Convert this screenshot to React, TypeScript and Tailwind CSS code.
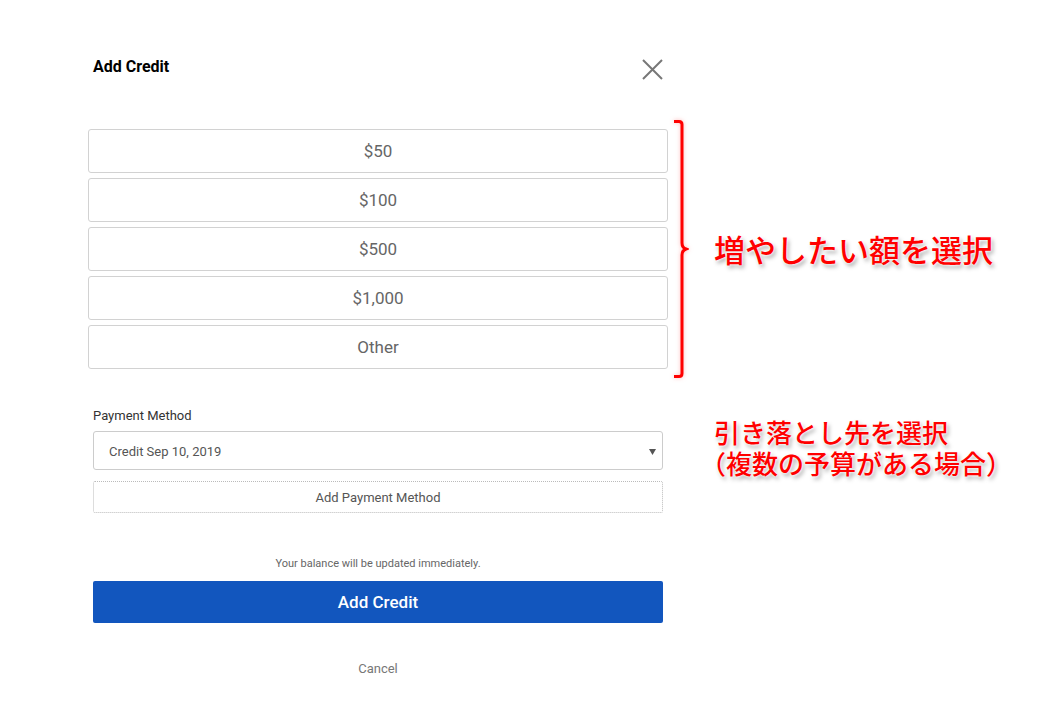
import React from 'react';

const amounts = ['$50', '$100', '$500', '$1,000', 'Other'];

const roboto = { fontFamily: 'Roboto, "Liberation Sans", sans-serif' };

export default function App() {
  return (
    <div className="w-full h-[702px] bg-white overflow-hidden" style={roboto}>
      <div className="flex">
        {/* dialog */}
        <div className="ml-[88px] w-[580px] pt-[56px] flex flex-col">
          <div className="flex justify-between items-start px-[5px] h-[73px]">
            <h2 className="mt-[1px] text-[16px] leading-[20px] font-bold text-black">Add Credit</h2>
            <button className="mt-[3px] w-[21px] h-[21px]" aria-label="close">
              <svg width="21" height="21" viewBox="0 0 21 21">
                <path d="M1 1 L20 20 M20 1 L1 20" stroke="#777" strokeWidth="2" fill="none" />
              </svg>
            </button>
          </div>

          <div className="flex flex-col gap-[5px]">
            {amounts.map(a => (
              <button
                key={a}
                className="h-[44px] w-full pt-[2px] border border-[#d2d2d2] rounded-[3px] bg-white text-[17px] text-[#666]"
              >
                {a}
              </button>
            ))}
          </div>

          <div className="px-[5px] flex flex-col">
            <label className="mt-[39px] text-[13px] leading-[16px] text-[#333]">Payment Method</label>
            <div className="mt-[7px] h-[39px] pt-[2px] border border-[#ccc] rounded-[3px] flex items-center justify-between pl-[15px] pr-[6px]">
              <span className="text-[13px] text-[#555]">Credit Sep 10, 2019</span>
              <svg width="7" height="6" viewBox="0 0 7 6">
                <path d="M0 0 H7 L3.5 6 Z" fill="#555" />
              </svg>
            </div>
            <button className="mt-[11px] h-[32px] pt-[2px] border border-dotted border-[#bbb] rounded-[2px] text-[13px] text-[#555]">
              Add Payment Method
            </button>

            <p className="mt-[44px] text-center text-[11px] leading-[14px] text-[#666]">
              Your balance will be updated immediately.
            </p>
            <button className="mt-[10px] h-[42px] pt-[2px] rounded-[2px] bg-[#1256be] text-white text-[17px] font-medium">
              Add Credit
            </button>
            <button className="mt-[38px] text-[13px] leading-[16px] text-[#777] self-center">Cancel</button>
          </div>
        </div>

        {/* annotations */}
        <div
          className="ml-[5px] pt-[120px] flex flex-col"
          style={{ fontFamily: '"Noto Sans CJK JP", sans-serif' }}
        >
          <div className="flex items-center">
            <svg width="16" height="258" viewBox="0 0 16 258" className="[filter:drop-shadow(0_0_2px_rgba(255,120,120,0.5))]">
              <path
                d="M1 1.5 H6 Q9 1.5 9 4.5 V123 Q9 127.5 13 129 Q9 130.5 9 135 V253.5 Q9 256.5 6 256.5 H1"
                stroke="#ff0000"
                strokeWidth="3"
                fill="none"
              />
            </svg>
            <span className="ml-[25px] text-[31px] leading-[40px] font-medium text-[#ff0000] whitespace-nowrap [text-shadow:0_0_2px_#fff,0_0_3px_#fff,2px_3px_4px_rgba(0,0,0,0.35)]">
              増やしたい額を選択
            </span>
          </div>
          <div className="mt-[38px] ml-[41px] text-[26px] leading-[31px] font-medium text-[#ff0000] whitespace-nowrap [text-shadow:0_0_2px_#fff,0_0_3px_#fff,2px_3px_4px_rgba(0,0,0,0.35)]">
            <div>引き落とし先を選択</div>
            <div className="-ml-[14px]">（複数の予算がある場合）</div>
          </div>
        </div>
      </div>
    </div>
  );
}
